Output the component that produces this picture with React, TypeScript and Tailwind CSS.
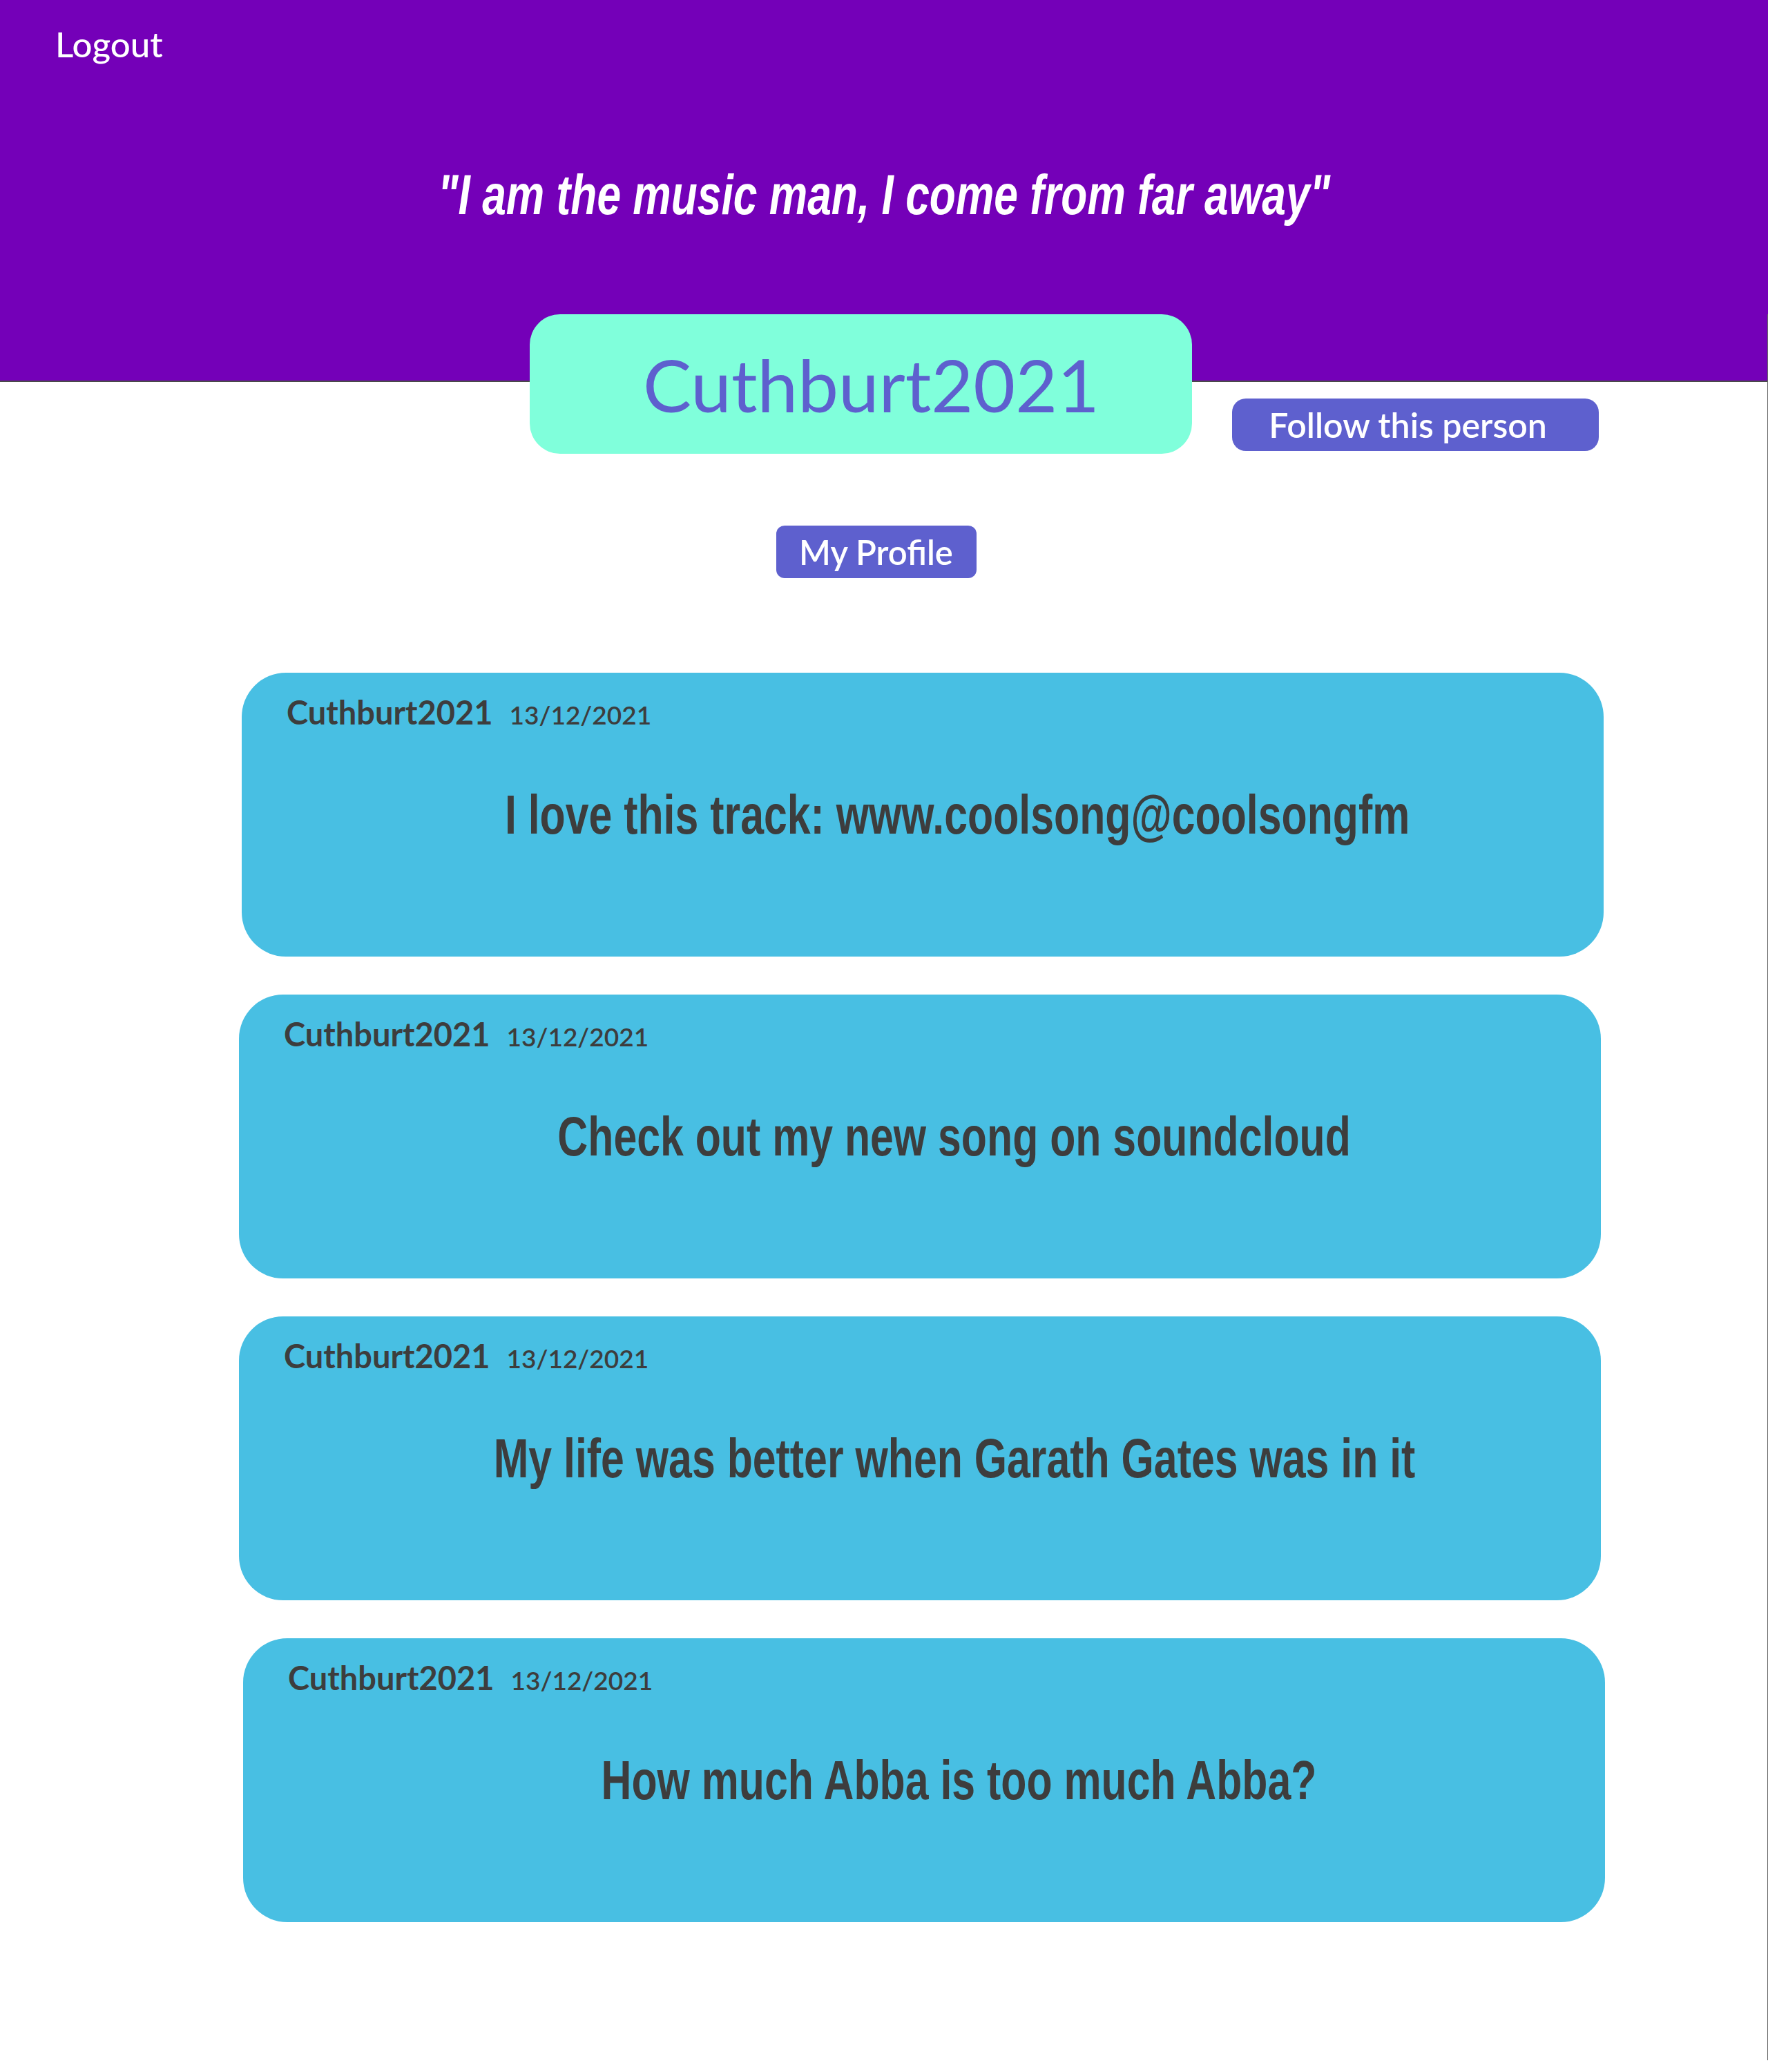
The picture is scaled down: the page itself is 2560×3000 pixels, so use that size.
import React from 'react';

type Post = {
  id: number;
  author: string;
  date: string;
  text: string;
  offset: string;
};

const posts: Post[] = [
  { id: 1, author: 'Cuthburt2021', date: '13/12/2021', text: 'I love this track: www.coolsong@coolsongfm', offset: 'ml-[4px]' },
  { id: 2, author: 'Cuthburt2021', date: '13/12/2021', text: 'Check out my new song on soundcloud', offset: 'ml-0' },
  { id: 3, author: 'Cuthburt2021', date: '13/12/2021', text: 'My life was better when Garath Gates was in it', offset: 'ml-0' },
  { id: 4, author: 'Cuthburt2021', date: '13/12/2021', text: 'How much Abba is too much Abba?', offset: 'ml-[6px]' },
];

function PostCard({ post }: { post: Post }) {
  return (
    <div className={`w-[1972px] h-[411px] rounded-[64px] bg-[#48bfe3] text-[#3d3d3d] pt-[34px] ${post.offset}`}>
      {/* author + date */}
      <div className="flex items-baseline gap-[24px] pl-[65px] font-['Lato',sans-serif] leading-none">
        <span className="text-[47px] font-bold">{post.author}</span>
        <span className="text-[37px] font-semibold">{post.date}</span>
      </div>
      {/* post body */}
      <div className="mt-[85px] flex justify-center pl-[100px]">
        <span className="inline-block scale-x-[0.76] whitespace-nowrap font-['Liberation_Sans',Arial,sans-serif] text-[80px] font-bold leading-none">
          {post.text}
        </span>
      </div>
    </div>
  );
}

export default function App() {
  return (
    <div className="w-[2560px] min-h-[3000px] bg-white font-['Lato',sans-serif]">
      {/* Header */}
      <header className="h-[553px] bg-[#7400b8] border-b-2 border-[#4a4a4a] text-white">
        <div className="pt-[38px] pl-[80px]">
          <button className="text-[51px] font-medium leading-none">Logout</button>
        </div>
        <div className="mt-[152px] flex justify-center">
          <h2 className="inline-block scale-x-[0.76] whitespace-nowrap font-['Liberation_Sans',Arial,sans-serif] text-[82px] font-bold italic leading-none">
            "I am the music man, I come from far away"
          </h2>
        </div>
      </header>

      <main className="min-h-[2447px] border-r border-[#666666]">
        {/* Name + follow */}
        <div className="-mt-[98px] flex items-start pl-[767px]">
          <div className="w-[959px] h-[202px] rounded-[44px] bg-[#80ffdb] flex items-center justify-center pl-[30px]">
            <h1 className="text-[105px] font-normal leading-none text-[#5e60ce]">Cuthburt2021</h1>
          </div>
          <button className="ml-[58px] mt-[122px] w-[531px] h-[76px] pr-[22px] rounded-[20px] bg-[#5e60ce] text-white text-[50px] font-semibold leading-none">
            Follow this person
          </button>
        </div>

        {/* My Profile */}
        <div className="mt-[104px] flex justify-center pr-[22px]">
          <button className="w-[290px] h-[76px] rounded-[12px] bg-[#5e60ce] text-white text-[49px] font-semibold leading-none">
            My Profile
          </button>
        </div>

        {/* Feed */}
        <div className="mt-[137px] flex flex-col gap-[55px] pl-[346px] pb-[200px]">
          {posts.map(post => (
            <PostCard key={post.id} post={post} />
          ))}
        </div>
      </main>
    </div>
  );
}
